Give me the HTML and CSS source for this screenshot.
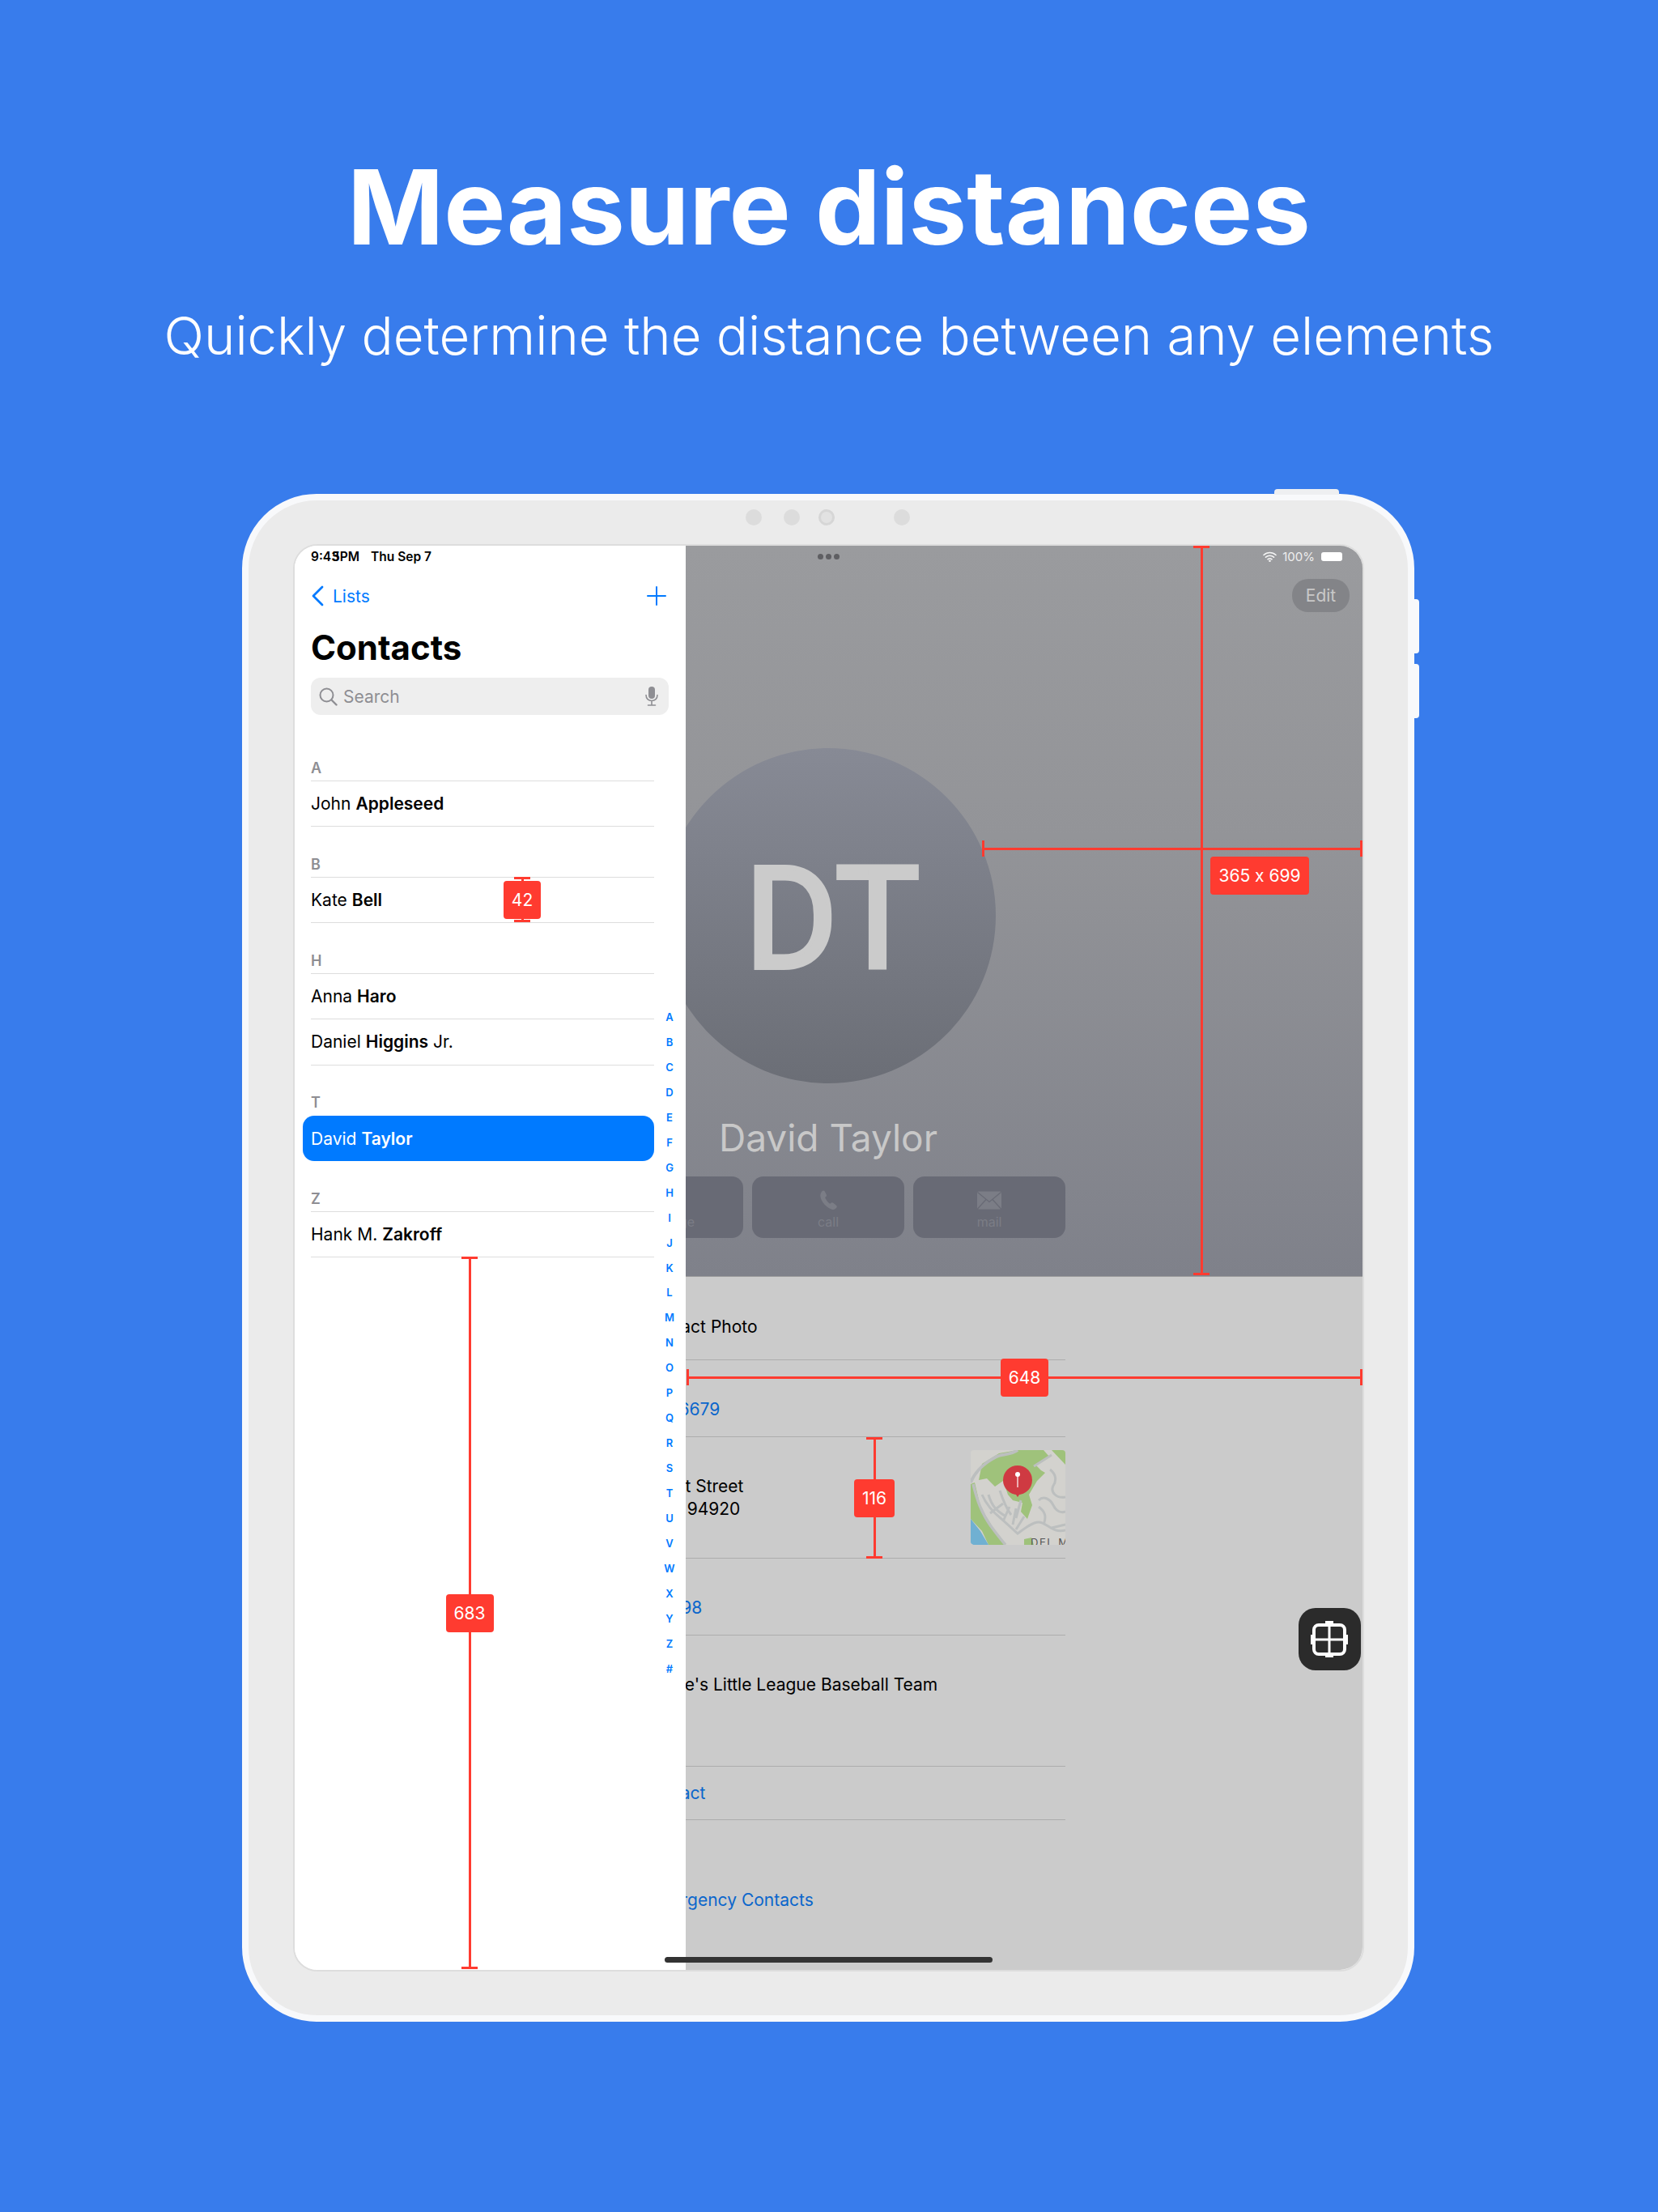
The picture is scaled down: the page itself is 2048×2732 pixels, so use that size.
FILE: index.html
```html
<!DOCTYPE html>
<html>
  <head>
    <title>Measure distances</title>
    <link rel="stylesheet" href="styles.css">
  </head>
  <body>
    <h1 class="headline">Measure distances</h1>
    <p class="subline">Quickly determine the distance between any elements</p>

    <div class="device">
      <span class="btn-top"></span>
      <span class="btn-side btn-side-1"></span>
      <span class="btn-side btn-side-2"></span>
      <div class="cameras">
        <span class="cam cam-1"></span>
        <span class="cam cam-2"></span>
        <span class="cam cam-3"></span>
        <span class="cam cam-4"></span>
      </div>

      <div class="screen">
        <aside class="sidebar">
          <div class="status-left">
            <span class="time">9:4<span class="time-a">3</span><span class="time-b">5</span>PM</span>
            <span>Thu Sep 7</span>
          </div>
          <div class="nav">
            <span class="back">
              <svg width="16" height="26" viewBox="0 0 16 26"><path d="M14 2 3 13l11 11" fill="none" stroke="#007aff" stroke-width="2.8" stroke-linecap="round" stroke-linejoin="round"/></svg>
              Lists
            </span>
            <svg class="plus" width="24" height="24" viewBox="0 0 24 24"><path d="M12 1v22M1 12h22" fill="none" stroke="#007aff" stroke-width="2" stroke-linecap="round"/></svg>
          </div>
          <h2 class="title">Contacts</h2>
          <div class="search">
            <svg width="23" height="23" viewBox="0 0 23 23"><circle cx="9.5" cy="9.5" r="8" fill="none" stroke="#8e8e93" stroke-width="2"/><path d="m15.5 15.5 6 6" stroke="#8e8e93" stroke-width="2.4" stroke-linecap="round"/></svg>
            <span class="search-text">Search</span>
            <svg width="16" height="24" viewBox="0 0 16 24"><rect x="4" y="0" width="8" height="15" rx="4" fill="#8e8e93"/><path d="M1 10.5c0 4.2 3 7 7 7s7-2.8 7-7M8 17.5V22M3.5 23h9" fill="none" stroke="#8e8e93" stroke-width="1.6" stroke-linecap="round"/></svg>
          </div>

          <div class="list">
            <section class="group">
              <div class="letter">A</div>
              <div class="person">John <b>Appleseed</b></div>
            </section>
            <section class="group">
              <div class="letter">B</div>
              <div class="person">Kate <b>Bell</b></div>
            </section>
            <section class="group">
              <div class="letter">H</div>
              <div class="person">Anna <b>Haro</b></div>
              <div class="person">Daniel <b>Higgins</b> Jr.</div>
            </section>
            <section class="group">
              <div class="letter letter-plain">T</div>
              <div class="person person-active">David <b>Taylor</b></div>
            </section>
            <section class="group">
              <div class="letter">Z</div>
              <div class="person">Hank M. <b>Zakroff</b></div>
            </section>
          </div>

          <div class="index">
            <span>A</span><span>B</span><span>C</span><span>D</span><span>E</span><span>F</span><span>G</span><span>H</span><span>I</span>
            <span>J</span><span>K</span><span>L</span><span>M</span><span>N</span><span>O</span><span>P</span><span>Q</span><span>R</span>
            <span>S</span><span>T</span><span>U</span><span>V</span><span>W</span><span>X</span><span>Y</span><span>Z</span><span>#</span>
          </div>
        </aside>

        <main class="panel">
          <div class="hero">
            <div class="contact">
              <div class="dots"><i></i><i></i><i></i></div>
              <div class="avatar">DT</div>
              <div class="name">David Taylor</div>
              <div class="actions">
                <div class="action"><span class="action-label">message</span></div>
                <div class="action">
                  <svg width="23" height="25" viewBox="3 1.500 18.500 20.500"><path d="M6.200 2.200C7 1.700 8 2 8.500 2.900L10 6c.4.800.2 1.600-.4 2.100l-1 .8c.8 2.100 3 5 5 6.300l1.200-.8c.7-.5 1.500-.4 2.200.1l3 2.300c.8.6.9 1.600.3 2.300-1.300 1.600-2.700 2.500-4.700 1.900C10.200 19.400 5 13.600 4 8c-.4-2.400.6-4.600 2.200-5.800z" fill="#7b7d86"/></svg>
                  <span class="action-label">call</span>
                </div>
                <div class="action">
                  <svg width="32" height="25" viewBox="0 0 32 24"><rect x="1" y="1" width="30" height="22" rx="2" fill="#7b7d86"/><path d="m1.500 2 14.500 12L30.500 2M1.500 22.500l10.500-11.500M30.500 22.500 20 11" fill="none" stroke="#686a75" stroke-width="1.300"/></svg>
                  <span class="action-label">mail</span>
                </div>
              </div>
            </div>
            <div class="hero-side">
              <div class="status-right">
                <svg width="17" height="13" viewBox="0 0 17 13"><path d="M1 4.500c4.300-4 10.700-4 15 0M3.500 7.200c2.900-2.700 7.100-2.700 10 0M6 9.800c1.500-1.300 3.500-1.300 5 0" fill="none" stroke="#f4f4f4" stroke-width="1.600" stroke-linecap="round"/><circle cx="8.500" cy="11.700" r="1.300" fill="#f4f4f4"/></svg>
                <span>100%</span>
                <span class="battery"></span>
              </div>
              <div class="edit">Edit</div>
            </div>
          </div>

          <div class="details">
            <div class="fields">
              <div class="field field-photo"><span class="pad-photo">Contact Photo</span></div>
              <div class="field field-phone"><span class="link pad-phone">555-610-6679</span></div>
              <div class="field field-address">
                <div class="pad-address">1747 Steuart Street<br>Tiburon CA 94920</div>
                <svg class="map" width="117" height="117" viewBox="0 0 117 117">
                  <rect width="117" height="117" fill="#d3d2ce"/>
                  <path d="M14 17 35 4 58 0h32l7 8-17 10 7 7 5 3-10 10-10 17 4 13-6 17-8-9 2-11-12-3-6-7-6-17-10 7-10-10-10 2z" fill="#9fc27b"/>
                  <path d="M0 42l5-2 7 30 18 30 12 17H22L14 100 0 85z" fill="#9fc27b"/>
                  <path d="M100 0h17v18zM66 110l9-2 3 9H66z" fill="#9fc27b"/>
                  <path d="M0 85l12 15 10 17H3l-3-2z" fill="#70b0d2"/>
                  <g fill="none" stroke="#bcbfbf" stroke-width="3">
                    <path d="M0 40C6 25 20 14 32 8 38 5 50 6 58 0" stroke-width="4"/>
                    <path d="M3 42c5 20 10 35 22 52 6 8 12 16 18 23" stroke-width="3.500"/>
                    <path d="M14 55c6 14 14 22 24 30l20 18c8-6 18-14 26-14 10 0 16 14 33 10"/>
                    <path d="M22 55c4 14 10 20 20 26M36 50c4 12 8 22 14 30M24 78l16-12M48 70l-8 18M56 72l-4 20M66 82l-10 16M62 62l-6 22"/>
                    <path d="M84 62c6-6 14-2 18 6 4 8 10 10 15 8M98 24c8 6 8 14 4 20-4 8 4 16 15 14M84 70c8 6 10 12 6 22"/>
                    <path d="M78 20 100 6M100 96l17-4"/>
                  </g>
                  <text x="74" y="119" class="map-label">DEL MAR</text>
                  <path d="M58 58 52 49h12z" fill="#cf3a42"/>
                  <circle cx="58" cy="37" r="18" fill="#cf3a42"/>
                  <circle cx="58" cy="30" r="3" fill="#fff"/>
                  <path d="M58 31v15" stroke="#fff" stroke-width="1.200"/>
                </svg>
              </div>
              <div class="field field-birthday"><span class="link pad-birthday">June 15, 1998</span></div>
              <div class="field field-notes"><span class="pad-notes">Plays on Cole's Little League Baseball Team</span></div>
              <div class="field field-share"><span class="link pad-share">Share Contact</span></div>
              <div class="field field-emergency"><span class="link pad-emergency">Add to Emergency Contacts</span></div>
            </div>
          </div>
        </main>

        <!-- measuring overlay -->
        <div class="measure measure-v m-hero"></div>
        <div class="measure measure-h m-hero-h"></div>
        <div class="tag m-hero-tag">365 x 699</div>
        <div class="measure measure-h m-648"><span class="tag">648</span></div>
        <div class="measure measure-v m-116"><span class="tag">116</span></div>
        <div class="measure measure-v m-42"><span class="tag">42</span></div>
        <div class="measure measure-v m-683"><span class="tag">683</span></div>

        <div class="float-btn">
          <svg width="77" height="77" viewBox="0 0 77 77">
            <rect x="19" y="21" width="38" height="36" rx="6" fill="none" stroke="#fff" stroke-width="4"/>
            <path d="M38 20v38M18 39h40" stroke="#fff" stroke-width="3"/>
            <path d="M33 16h10v6H33zM33 55h10v6H33zM15 33h6v12h-6zM55 33h6v12h-6z" fill="#fff"/>
          </svg>
        </div>
        <div class="home-bar"></div>
      </div>
    </div>
  </body>
</html>
```

FILE: styles.css
```css
* {
  box-sizing: border-box;
}
body {
  margin: 0;
  padding: 176px 0 235px;
  background: #387cec;
  font-family: Inter, "Liberation Sans", sans-serif;
  color: #000;
}
.headline {
  margin: 0;
  font-size: 128px;
  line-height: 160px;
  font-weight: 700;
  color: #fff;
  text-align: center;
}
.subline {
  margin: 39px 0 0;
  font-size: 65.2px;
  line-height: 80px;
  font-weight: 300;
  color: #fff;
  text-align: center;
}

/* tablet frame */
.device {
  position: relative;
  display: flex;
  width: 1448px;
  height: 1887px;
  margin: 155px 0 0 299px;
  padding: 54px 54px 54px 55px;
  background: #ebebeb;
  border: 8px solid #f8f9fb;
  border-radius: 92px;
}
.btn-top {
  position: absolute;
  top: -14px;
  left: 1267px;
  width: 80px;
  height: 7px;
  background: #eeeff1;
  border-radius: 4px 4px 0 0;
}
.btn-side {
  position: absolute;
  right: -14px;
  width: 7px;
  height: 67px;
  background: #f8f9fb;
  border-radius: 0 4px 4px 0;
}
.btn-side-1 {
  top: 122px;
}
.btn-side-2 {
  top: 202px;
}
.cameras {
  position: absolute;
  top: 11px;
  left: 614px;
  display: flex;
}
.cam {
  width: 20px;
  height: 20px;
  border-radius: 50%;
  background: #dcdcdc;
}
.cam-2 {
  margin-left: 27px;
}
.cam-3 {
  margin-left: 23px;
  border: 3px solid #d6d6d6;
  background: #e2e2e2;
}
.cam-4 {
  margin-left: 73px;
}

.screen {
  position: relative;
  flex: 1;
  display: flex;
  overflow: hidden;
  background: #fff;
  border: 2px solid #ddd;
  border-radius: 30px;
}

/* left column */
.sidebar {
  position: relative;
  z-index: 1;
  flex: none;
  width: 483px;
  padding: 0 21px 0 20px;
  background: #fff;
}
.status-left {
  display: flex;
  gap: 14px;
  height: 27px;
  align-items: center;
  font-size: 15.5px;
  font-weight: 600;
}
.time-a {
  margin-right: -9px;
}
.nav {
  display: flex;
  justify-content: space-between;
  align-items: center;
  height: 44px;
  margin-top: 13px;
  color: #007aff;
  font-size: 21px;
}
.back {
  display: flex;
  align-items: center;
  gap: 11px;
}
.plus {
  margin-right: 3px;
}
.title {
  margin: 17px 0 0;
  font-size: 42px;
  line-height: 50px;
  font-weight: 700;
}
.search {
  display: flex;
  align-items: center;
  height: 46px;
  margin-top: 12px;
  padding: 0 13px 0 10px;
  background: #eee;
  border-radius: 12px;
}
.search-text {
  flex: 1;
  margin-left: 7px;
  font-size: 21px;
  color: #8e8e93;
}
.list {
  width: 424px;
  margin-top: 50.5px;
}
.group {
  margin-bottom: 31.5px;
}
.letter {
  height: 31px;
  line-height: 29px;
  font-size: 18px;
  font-weight: 600;
  color: #8e8e93;
  border-bottom: 1.5px solid #ddd;
}
.letter-plain {
  border-bottom-color: transparent;
}
.person {
  display: flex;
  gap: 6px;
  align-items: center;
  height: 56.5px;
  font-size: 21px;
  border-bottom: 1.5px solid #ddd;
}
.person b {
  font-weight: 600;
}
.person-active {
  height: 56px;
  margin-left: -10px;
  padding-left: 10px;
  background: #007aff;
  border: 0;
  border-radius: 14px;
  color: #fff;
}
.index {
  position: absolute;
  top: 567px;
  left: 451px;
  display: flex;
  flex-direction: column;
  width: 24px;
  font-size: 13px;
  font-weight: 600;
  color: #007aff;
  text-align: center;
}
.index span {
  height: 30.96px;
  line-height: 31px;
}

/* right column */
.panel {
  flex: 1;
  display: flex;
  flex-direction: column;
  min-width: 0;
  background: #cbcbcb;
}
.hero {
  flex: none;
  display: flex;
  justify-content: flex-end;
  height: 903px;
  overflow: hidden;
  background: linear-gradient(#9a9b9e, #939498 40%, #7f818a);
  border-bottom: 1px solid #999;
}
.contact {
  flex: none;
  display: flex;
  flex-direction: column;
  align-items: center;
  width: 586px;
}
.dots {
  display: flex;
  gap: 3px;
  margin-top: 10px;
}
.dots i {
  width: 7px;
  height: 7px;
  border-radius: 50%;
  background: #5f5f63;
}
.avatar {
  display: flex;
  align-items: center;
  justify-content: center;
  width: 414px;
  height: 414px;
  margin-top: 233px;
  padding: 9px 0 0 10px;
  border-radius: 50%;
  background: linear-gradient(#878a95, #6b6e76);
  font-family: Roboto, sans-serif;
  font-size: 174px;
  font-weight: 400;
  color: #cbcbcb;
  -webkit-text-stroke: 6px #cbcbcb;
}
.name {
  margin-top: 38px;
  font-size: 46px;
  line-height: 58px;
  color: #c8c8c8;
}
.actions {
  display: flex;
  gap: 11px;
  width: 586px;
  margin-top: 19px;
}
.action {
  flex: 1;
  display: flex;
  flex-direction: column;
  align-items: center;
  justify-content: flex-end;
  gap: 4px;
  height: 76px;
  padding-bottom: 10px;
  background: #686a75;
  border-radius: 14px;
}
.action-label {
  font-size: 16px;
  line-height: 20px;
  color: #7b7d86;
}
.hero-side {
  flex: none;
  display: flex;
  flex-direction: column;
  align-items: flex-end;
  width: 367px;
}
.status-right {
  display: flex;
  align-items: center;
  gap: 7px;
  height: 27px;
  padding-right: 25px;
  font-size: 15px;
  color: #eee;
}
.battery {
  width: 26px;
  height: 11px;
  margin-left: 1px;
  background: #fff;
  border-radius: 3px;
}
.edit {
  display: flex;
  align-items: center;
  justify-content: center;
  width: 71px;
  height: 41px;
  margin: 14px 16px 0 0;
  background: #838488;
  border-radius: 20px;
  font-size: 21px;
  color: #c9c9c9;
}
.details {
  flex: 1;
  display: flex;
  justify-content: flex-end;
  min-height: 0;
  padding-right: 367px;
  overflow: hidden;
}
.fields {
  flex: none;
  width: 596px;
  font-size: 21px;
  line-height: 28px;
}
.field {
  display: flex;
  justify-content: space-between;
  align-items: center;
  border-bottom: 1.5px solid #adadad;
  white-space: nowrap;
}
.link {
  color: #0a66cc;
}
.field-photo {
  height: 103px;
  padding-top: 22px;
}
.field-phone {
  height: 95px;
  padding-top: 28px;
}
.field-address {
  height: 150px;
}
.field-birthday {
  height: 95px;
  padding-top: 28px;
}
.field-notes {
  align-items: flex-start;
  height: 162px;
  padding-top: 47px;
}
.field-share {
  height: 66px;
  padding-top: 1px;
}
.field-emergency {
  align-items: flex-start;
  height: 185px;
  padding-top: 85px;
  border: 0;
}
.pad-photo {
  padding-left: 74px;
}
.pad-phone {
  padding-left: 26px;
}
.pad-address {
  padding-left: 11px;
}
.pad-birthday {
  padding-left: 12px;
}
.pad-notes {
  padding-left: 3px;
}
.pad-share {
  padding-left: 10px;
}
.pad-emergency {
  padding-left: 7px;
}
.map {
  border-radius: 4px;
}
.map-label {
  font-size: 13px;
  letter-spacing: 1.5px;
  fill: #555;
}

/* measuring overlay */
.measure {
  position: absolute;
  z-index: 2;
  display: flex;
  align-items: center;
  justify-content: center;
  border-color: #ff3b30;
  border-style: solid;
  border-width: 0;
}
.measure::before {
  content: "";
  position: absolute;
  background: #ff3b30;
}
.measure-v {
  width: 20px;
  border-top-width: 3px;
  border-bottom-width: 3px;
}
.measure-v::before {
  top: 0;
  bottom: 0;
  left: 8.5px;
  width: 3px;
}
.measure-h {
  height: 20px;
  border-left-width: 3px;
  border-right-width: 3px;
}
.measure-h::before {
  top: 8.5px;
  left: 0;
  right: 0;
  height: 3px;
}
.tag {
  position: relative;
  z-index: 3;
  flex: none;
  display: flex;
  align-items: center;
  justify-content: center;
  height: 47px;
  padding: 0 10px;
  background: #ff3b30;
  border-radius: 4px;
  font-size: 21px;
  font-feature-settings: "calt" 0;
  color: #fff;
}
.m-hero {
  top: 0;
  left: 1110px;
  height: 901px;
}
.m-hero-h {
  top: 364px;
  left: 849px;
  width: 470px;
}
.m-hero-tag {
  position: absolute;
  top: 384px;
  left: 1131px;
  width: 122px;
  padding: 0;
}
.m-648 {
  top: 1017px;
  left: 484px;
  width: 835px;
}
.m-116 {
  top: 1101px;
  left: 706px;
  height: 150px;
}
.m-42 {
  top: 409px;
  left: 271px;
  height: 56px;
}
.m-683 {
  top: 878px;
  left: 206px;
  height: 880px;
}
.float-btn {
  position: absolute;
  z-index: 3;
  top: 1312px;
  left: 1240px;
  width: 77px;
  height: 77px;
  background: #2b2b2b;
  border-radius: 21px;
}
.home-bar {
  position: absolute;
  z-index: 3;
  top: 1743px;
  left: 457px;
  width: 405px;
  height: 7px;
  background: #333;
  border-radius: 4px;
}
```
